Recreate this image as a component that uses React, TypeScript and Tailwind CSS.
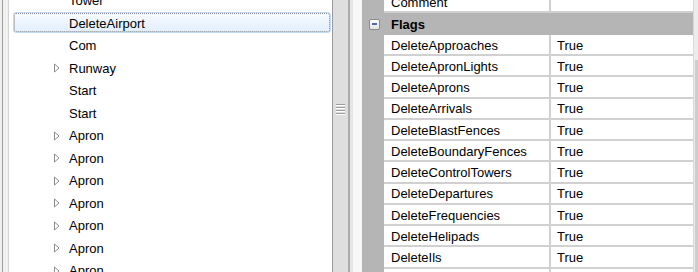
import React from "react";

const treeRows: { label: string; expander?: boolean; selected?: boolean }[] = [
  { label: "Tower" },
  { label: "DeleteAirport", selected: true },
  { label: "Com" },
  { label: "Runway", expander: true },
  { label: "Start" },
  { label: "Start" },
  { label: "Apron", expander: true },
  { label: "Apron", expander: true },
  { label: "Apron", expander: true },
  { label: "Apron", expander: true },
  { label: "Apron", expander: true },
  { label: "Apron", expander: true },
  { label: "Apron", expander: true },
];

const flags = [
  "DeleteApproaches",
  "DeleteApronLights",
  "DeleteAprons",
  "DeleteArrivals",
  "DeleteBlastFences",
  "DeleteBoundaryFences",
  "DeleteControlTowers",
  "DeleteDepartures",
  "DeleteFrequencies",
  "DeleteHelipads",
  "DeleteIls",
  "",
];

function Expander() {
  return (
    <svg width="7" height="10" viewBox="0 0 7 10" className="block">
      <path d="M1.5 1 L6 5 L1.5 9 Z" fill="#ffffff" stroke="#8c8c8c" strokeWidth="1" strokeLinejoin="round" />
    </svg>
  );
}

function TreeRow({ label, expander, selected }: { label: string; expander?: boolean; selected?: boolean }) {
  if (selected) {
    return (
      <div className="h-[22.5px] flex items-center">
        <div className="ml-[4px] mr-[1px] flex-1 h-[21px] rounded-[3px] border border-[#c0d9f7] bg-gradient-to-b from-[#f7fbff] to-[#e2eefc]">
          <div className="h-full rounded-[2px] border border-dotted border-[#8a8a8a] flex items-center pl-[54px] pt-px">
            {label}
          </div>
        </div>
      </div>
    );
  }
  return (
    <div className="h-[22.5px] flex items-center pl-[44px] pt-px">
      <div className="w-[16px] flex items-center">{expander && <Expander />}</div>
      <span>{label}</span>
    </div>
  );
}

function Gripper() {
  return (
    <div className="flex flex-col gap-px">
      {[0, 1, 2, 3].map((i) => (
        <div key={i} className="w-[9px] h-px bg-[#9d9d9d] border-b border-white box-content" />
      ))}
    </div>
  );
}

function PropRow({ name, value }: { name: string; value: string }) {
  return (
    <div className="flex h-[21.27px] shrink-0">
      <div className="w-[22px] bg-[#b5b5b5]" />
      <div className="w-[167px] bg-white border-r-2 border-b-2 border-[#d0d0d0] pl-[7px] pt-[2px] flex items-center whitespace-nowrap overflow-hidden">
        {name}
      </div>
      <div className="flex-1 bg-white border-b-2 border-[#d0d0d0] pl-[6px] pt-[2px] flex items-center">{value}</div>
    </div>
  );
}

export default function App() {
  return (
    <div
      className="w-[698px] h-[272px] flex overflow-hidden bg-[#f0f0f0] text-[13px] text-black"
      style={{ fontFamily: '"Liberation Sans", Arial, sans-serif' }}
    >
      {/* left frame */}
      <div className="w-[2px] bg-[#f0f0f0]" />
      <div className="w-px bg-[#a0a0a0]" />
      <div className="w-[5px] bg-[#f0f0f0]" />

      {/* tree */}
      <div className="w-[325px] bg-white border-l border-[#d4d4d4] border-r border-r-[#9a9a9a] overflow-hidden">
        <div className="mt-[-11px]">
          {treeRows.map((r, i) => (
            <TreeRow key={i} {...r} />
          ))}
        </div>
      </div>

      {/* splitter */}
      <div className="w-[15px] bg-[#dedede] flex items-center justify-center">
        <div className="mt-[-54px]">
          <Gripper />
        </div>
      </div>
      <div className="w-[2px] bg-[#ababab]" />
      <div className="w-[3px] bg-[#e6e6e6]" />
      <div className="w-[9px] bg-[#f7f7f7]" />

      {/* property grid */}
      <div className="w-[331px] flex flex-col overflow-hidden">
        <div className="mt-[-8.27px] flex flex-col">
          <PropRow name="Comment" value="" />
          <div className="flex h-[21.73px] shrink-0 bg-[#b5b5b5] items-center pt-px">
            <div className="w-[22px] pl-[7px] flex items-center">
              <div className="w-[11px] h-[11px] rounded-[2px] border border-[#8b8b8b] bg-gradient-to-b from-white to-[#e4e4e4] flex items-center justify-center">
                <div className="w-[5px] h-[2px] bg-[#4d6aa8]" />
              </div>
            </div>
            <span className="pl-[7px] font-bold">Flags</span>
          </div>
          {flags.map((f, i) => (
            <PropRow key={i} name={f} value={f ? "True" : ""} />
          ))}
        </div>
      </div>

      {/* scrollbar */}
      <div className="w-px bg-[#d8d8d8]" />
      <div className="flex-1 flex flex-col bg-[#ececec]">
        <div className="h-[60px]" />
        <div className="flex-1 ml-px bg-[#cdcdcd]" />
      </div>
    </div>
  );
}
